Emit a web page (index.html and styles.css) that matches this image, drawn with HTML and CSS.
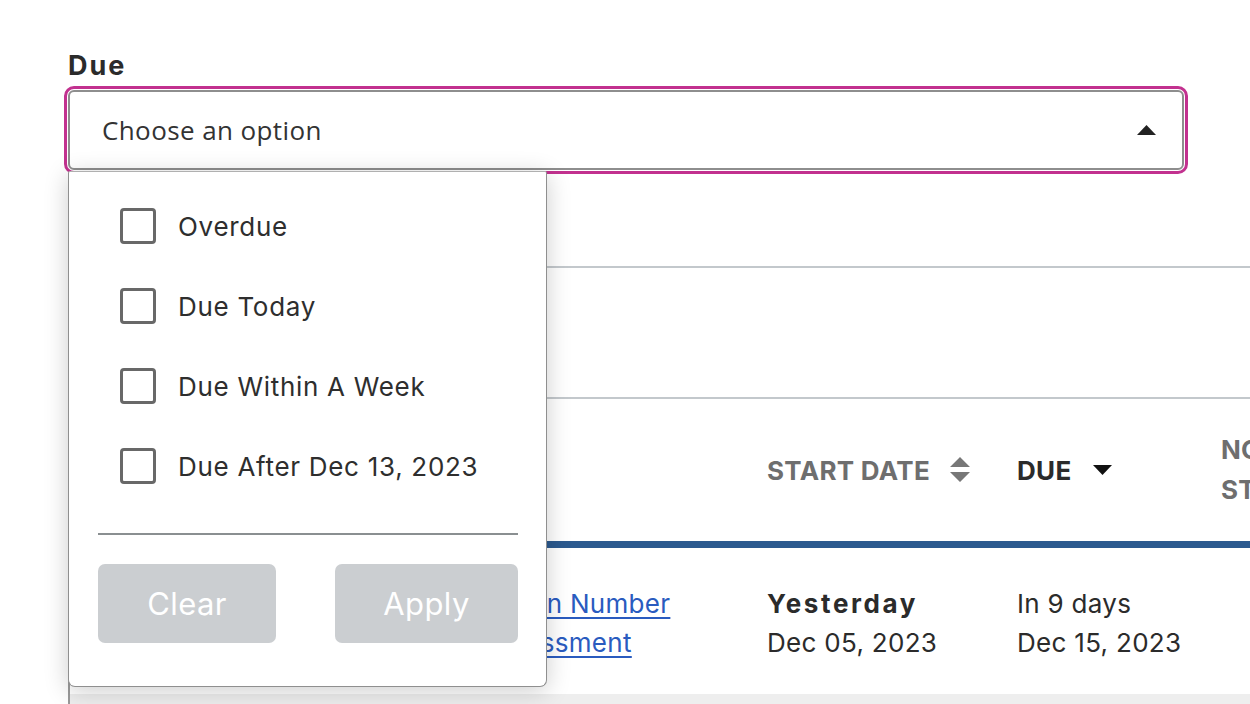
FILE: index.html
```html
<!DOCTYPE html>
<html lang="en">
<head>
<meta charset="utf-8">
<title>Due filter</title>
<link rel="stylesheet" href="styles.css">
</head>
<body>
<div class="page">
  <div class="field">
    <label class="field-label">Due</label>
    <div class="select-ring">
      <div class="select-box">
        <span class="placeholder">Choose an option</span>
        <svg class="caret" width="19" height="10" viewBox="0 0 19 10"><path d="M0 10 L9.5 0 L19 10 Z" fill="#222"/></svg>
      </div>
    </div>
    <div class="dropdown">
      <ul class="options">
        <li class="option"><span class="checkbox"></span><span class="option-text">Overdue</span></li>
        <li class="option"><span class="checkbox"></span><span class="option-text">Due Today</span></li>
        <li class="option"><span class="checkbox"></span><span class="option-text">Due Within A Week</span></li>
        <li class="option"><span class="checkbox"></span><span class="option-text">Due After Dec 13, 2023</span></li>
      </ul>
      <div class="divider"></div>
      <div class="actions">
        <button class="btn btn-clear">Clear</button>
        <button class="btn btn-apply">Apply</button>
      </div>
    </div>
  </div>

  <div class="table-card">
    <div class="toolbar"></div>
    <div class="summary"></div>
    <div class="thead">
      <div class="cell col-name th th-name">NAME</div>
      <div class="cell col-start th th-muted">START DATE
        <svg class="sort-both" width="20" height="26" viewBox="0 0 20 26"><path d="M0 10 L10 0 L20 10 Z M0 15 L10 25 L20 15 Z" fill="#777"/></svg>
      </div>
      <div class="cell col-due th th-active">DUE
        <svg class="sort-down" width="19" height="10" viewBox="0 0 19 10"><path d="M0 0 L9.5 10 L19 0 Z" fill="#111"/></svg>
      </div>
      <div class="cell col-status th th-muted">NOTE STATUS</div>
    </div>
    <div class="trow">
      <div class="cell col-name"><a class="task-link" href="#"><span class="line">Option Number</span><span class="line">Assessment</span></a></div>
      <div class="cell col-start"><span class="strong">Yesterday</span><span>Dec 05, 2023</span></div>
      <div class="cell col-due"><span>In 9 days</span><span>Dec 15, 2023</span></div>
      <div class="cell col-status"></div>
    </div>
    <div class="trow trow-alt"></div>
  </div>
</div>
</body>
</html>
```

FILE: styles.css
```css
* { box-sizing: border-box; }
html, body { margin: 0; padding: 0; }
body {
  width: 1250px;
  height: 704px;
  overflow: hidden;
  background: #fff;
  font-family: Inter, "Liberation Sans", sans-serif;
  color: #2b2b2b;
}
.page {
  padding: 50px 0 0 64px;
}
.field {
  position: relative;
  width: 1124px;
}
.field-label {
  display: block;
  padding-left: 4px;
  font-size: 27px;
  line-height: 32px;
  font-weight: 700;
  letter-spacing: 2px;
  color: #2b2b2b;
  margin-bottom: 4px;
}
.select-ring {
  border: 3px solid #c2318f;
  border-radius: 10px;
  padding: 1px;
}
.select-box {
  height: 80px;
  border: 2px solid #8e8e8e;
  border-radius: 6px;
  display: flex;
  align-items: center;
  justify-content: space-between;
  padding: 0 26px 0 32px;
}
.placeholder {
  font-family: "Open Sans", "Noto Sans", sans-serif;
  font-size: 26px;
  color: #333;
  letter-spacing: 0.4px;
}
.caret { display: block; }

.dropdown {
  position: absolute;
  left: 4px;
  top: 121px;
  width: 479px;
  z-index: 5;
  background: #fff;
  border: 1px solid #8f8f8f;
  border-top-color: #b0b0b0;
  border-radius: 2px 2px 7px 7px;
  box-shadow: 0 4px 24px rgba(0, 0, 0, 0.2);
  padding: 14px 28px 43px 29px;
}
.options {
  list-style: none;
  margin: 0;
  padding: 0 0 0 22px;
}
.option {
  height: 80px;
  display: flex;
  align-items: center;
  gap: 22px;
}
.checkbox {
  width: 36px;
  height: 36px;
  border: 3px solid #686868;
  border-radius: 4px;
  flex: none;
}
.option-text {
  font-size: 26px;
  letter-spacing: 0.7px;
  color: #2e2e2e;
}
.divider {
  height: 2px;
  background: #8a8f91;
  margin-top: 27px;
}
.actions {
  margin-top: 29px;
  display: flex;
  justify-content: space-between;
}
.btn {
  height: 79px;
  border: none;
  border-radius: 7px;
  background: #cbced1;
  color: #fff;
  font-family: Inter, "Liberation Sans", sans-serif;
  font-size: 31px;
  letter-spacing: 0.4px;
  padding: 0;
}
.btn-clear { width: 178px; }
.btn-apply { width: 183px; }

.table-card {
  margin-left: 4px;
  width: 1300px;
  border-left: 2px solid #9a9a9a;
}
.toolbar {
  height: 94px;
  border-bottom: 2px solid #c3c8cc;
}
.summary {
  height: 131px;
  border-bottom: 2px solid #c3c8cc;
}
.thead {
  height: 149px;
  border-bottom: 7px solid #2c5a8f;
  display: flex;
  align-items: center;
}
.trow {
  height: 146px;
  padding-top: 4px;
  display: flex;
  align-items: center;
}
.trow-alt {
  height: 40px;
  padding: 0;
  background: #eeeeee;
}
.cell {
  flex: none;
  font-size: 26px;
  line-height: 39px;
  letter-spacing: 0.3px;
}
.col-name { width: 697px; padding-left: 409px; }
.col-start { width: 250px; display: flex; flex-direction: column; }
.col-due { width: 204px; display: flex; flex-direction: column; }
.col-status { width: 200px; }
.th {
  font-weight: 700;
  font-size: 26px;
  letter-spacing: 0.3px;
  display: flex;
  flex-direction: row;
  align-items: center;
}
.th-name { padding-left: 120px; color: #6e6e6e; }
.th-muted { color: #6e6e6e; }
.th-active { color: #2b2b2b; }
.col-status.th { width: 60px; line-height: 40px; }
.sort-both { margin-left: 20px; }
.sort-down { margin-left: 21px; }
.strong { font-weight: 700; letter-spacing: 2.6px; }
.task-link {
  color: #2a5bbf;
  text-decoration: underline;
  text-underline-offset: 4px;
  text-decoration-thickness: 2px;
}
.task-link .line { display: block; }
```
